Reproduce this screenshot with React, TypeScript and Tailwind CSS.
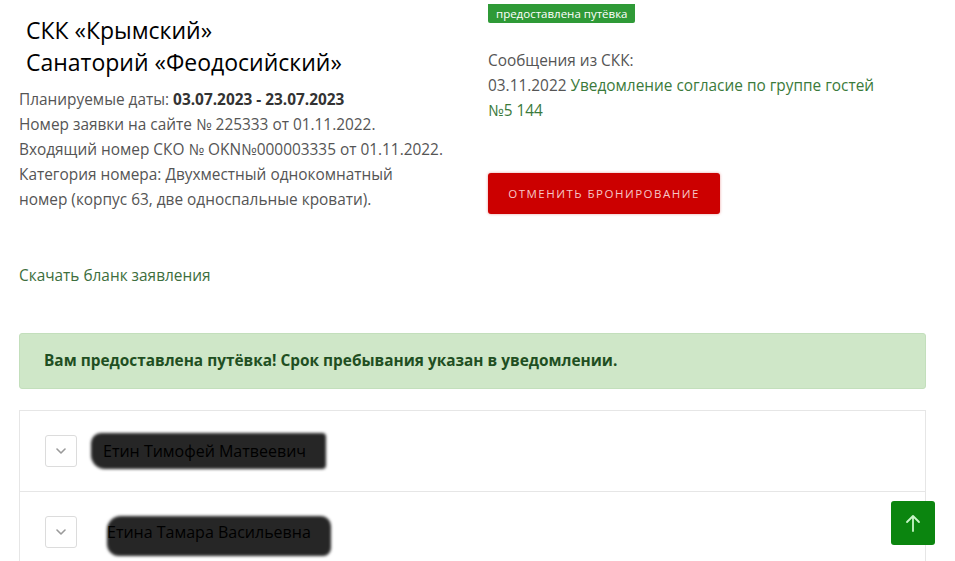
import React from "react";

const body = { fontFamily: '"Open Sans", "Liberation Sans", sans-serif' } as React.CSSProperties;

function Chevron() {
  return (
    <div className="w-8 h-8 border border-[#dcdcdc] rounded-[3px] flex items-center justify-center bg-white shrink-0">
      <svg width="10" height="6" viewBox="0 0 10 6" fill="none">
        <path d="M1 1l4 4 4-4" stroke="#9a9a9a" strokeWidth="1.6" strokeLinecap="round" strokeLinejoin="round" />
      </svg>
    </div>
  );
}

function Redacted({ name, blob }: { name: string; blob: string }) {
  return (
    <span className="relative inline-block">
      <span className={`absolute bg-[#262626] blur-[1.5px] ${blob}`} />
      <span className="relative text-[16px] text-black" style={{ fontFamily: '"Open Sans", sans-serif' }}>{name}</span>
    </span>
  );
}

export default function App() {
  return (
    <div className="w-[955px] h-[561px] bg-white overflow-hidden relative" style={body}>
      <div className="flex pl-[19px]">
        <div className="w-[469px] shrink-0">
          <div className="pl-[7px] pt-[14px] text-[23px] leading-[32px] text-black" style={{ fontFamily: '"Open Sans", sans-serif' }}>
            <div>СКК «Крымский»</div>
            <div>Санаторий «Феодосийский»</div>
          </div>
          <div className="mt-[9px] text-[15.4px] leading-[25px] text-[#555]">
            <div>Планируемые даты: <b className="font-bold text-[#333]">03.07.2023 - 23.07.2023</b></div>
            <div>Номер заявки на сайте № 225333 от 01.11.2022.</div>
            <div>Входящий номер СКО № OKN№000003335 от 01.11.2022.</div>
            <div>Категория номера: Двухместный однокомнатный</div>
            <div>номер (корпус 63, две односпальные кровати).</div>
          </div>
          <div className="mt-[51px] text-[15.4px] leading-[25px] text-[#3d6e3d]">Скачать бланк заявления</div>
        </div>
        <div className="flex-1">
          <div className="inline-block bg-[#2f9a37] text-white text-[11.5px] leading-[19px] px-[8px] rounded-b-[2px]">предоставлена путёвка</div>
          <div className="mt-[24px] text-[15.4px] leading-[25px] text-[#555]">
            <div>Сообщения из СКК:</div>
            <div>03.11.2022 <span className="text-[#3b7a3b]">Уведомление согласие по группе гостей</span></div>
            <div className="text-[#3b7a3b]">№5 144</div>
          </div>
          <button className="mt-[50px] w-[232px] h-[41px] bg-[#cc0000] rounded-[3px] text-[#f5c6c6] text-[11.5px] tracking-[1.5px] shadow-[0_0_3px_rgba(200,0,0,0.4)]">ОТМЕНИТЬ БРОНИРОВАНИЕ</button>
        </div>
      </div>

      <div className="ml-[19px] mr-[29px] mt-[45px] h-[56px] bg-[#cfe7c8] border border-[#c3dfbc] rounded-[3px] flex items-center pl-[24px]">
        <span className="text-[15.4px] font-bold text-[#1f4f22]">Вам предоставлена путёвка! Срок пребывания указан в уведомлении.</span>
      </div>

      <div className="ml-[19px] mr-[29px] mt-[21px] border border-[#e6e6e6] border-b-0">
        <div className="h-[81px] flex items-center pl-[25px] border-b border-[#e6e6e6]">
          <Chevron />
          <span className="ml-[26px]">
            <Redacted name="Етин Тимофей Матвеевич" blob="left-[-12px] right-[-20px] top-[-6px] bottom-[-6px] rounded-[10px_4px_4px_14px]" />
          </span>
        </div>
        <div className="h-[81px] flex items-start pt-[24px] pl-[25px]">
          <Chevron />
          <span className="ml-[30px] mt-[4px]">
            <Redacted name="Етина Тамара Васильевна" blob="left-[0px] right-[-20px] top-[-4px] bottom-[-12px] rounded-[14px_10px_8px_12px]" />
          </span>
        </div>
      </div>

      <button className="absolute left-[891px] top-[501px] w-[44px] h-[44px] bg-[#0b850f] rounded-[3px] flex items-center justify-center">
        <svg width="16" height="20" viewBox="0 0 16 20" fill="none">
          <path d="M8 18V3M2 9l6-6 6 6" stroke="#c8f5c8" strokeWidth="1.8" strokeLinecap="round" strokeLinejoin="round" />
        </svg>
      </button>
    </div>
  );
}
